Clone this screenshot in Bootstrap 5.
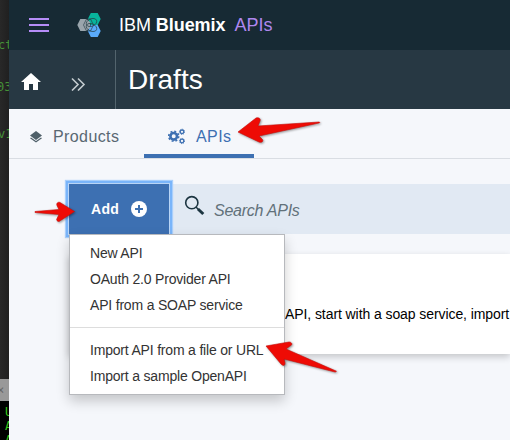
<!DOCTYPE html>
<html lang="en">
<head>
<meta charset="utf-8">
<title>Drafts - IBM Bluemix APIs</title>
<link rel="stylesheet" href="https://cdn.jsdelivr.net/npm/bootstrap@5.3.0/dist/css/bootstrap.min.css">
<style>
body{width:510px;height:440px;background:#f5f7fb;font-family:"Liberation Sans",Arial,sans-serif;color:#000}
svg{display:block;flex:none}
.terminal{width:9px;font:12px/16px "DejaVu Sans Mono",monospace;color:#459237;background:linear-gradient(90deg,#282828,#202020)}
.terminal div{flex:none;overflow:hidden;white-space:pre}
.terminal .t1{height:53px;padding-top:37px;text-indent:-2px}
.terminal .t2{height:42px;padding-top:26px;text-indent:-3px}
.terminal .t3{height:284px;padding-top:31px;text-indent:-2px}
.terminal .tab-x{height:22px;background:#999;color:#666;line-height:22px;text-indent:-3px}
.terminal .shell{height:61px;background:#000;color:#35c91b;line-height:14px;padding:4px 0 0 5px}
.topbar{height:50px;background:#172a34;padding-left:20px;font-size:18px;color:#fff}
.brand-name{margin-left:14px;letter-spacing:-.05px}
.violet{color:#af87ee;margin-left:9px}
.titlebar{height:59px;background:#273843}
.homebox{width:107px;border-right:1px solid #53646d;padding:23px 0 0 12px}
.titlebar h1{font-size:28px;line-height:60px;margin:0 0 0 12px;font-weight:400;color:#fff}
.tabs{height:50px;border-bottom:1px solid #d9dde3;font-size:16px;letter-spacing:.4px;color:#596872}
.tabs .nav-link{padding:0;height:49px;display:flex;align-items:center;color:#596872}
.tabs .prod{width:135px;padding:6px 0 0 21px}
.tabs .prod span{margin-left:11px}
.tabs .apis{width:110px;padding:10px 0 0 24px;color:#3d70b2;border-bottom:4px solid #3d70b2}
.tabs .apis span{margin-left:11px}
.workspace{padding:25px 0 0 60px}
.toolbar{height:50px;background:#e1e9f3}
.add{width:100px;height:50px;border-radius:0;background:#3d70b2;color:#fff;font-size:14px;font-weight:700;padding:0 0 0 22px;box-shadow:0 0 0 1px #b9d5f6,0 0 0 3px #7ab5fa,0 0 1px 4px #a9cffb;letter-spacing:.3px;z-index:2}
.add:hover{background:#3d70b2;color:#fff}
.add svg{margin-left:12px}
.search{font-size:16px;letter-spacing:-.25px;font-style:italic;color:#62717a;padding:4px 0 0 9px}
.notice{height:100px;margin-top:20px;background:#fff;box-shadow:0 3px 7px #0003;padding:50px 0 0 216px;font-size:14px;letter-spacing:-.08px;line-height:20px;white-space:nowrap}
.add-menu{display:block;top:50px;left:0;width:216px;height:161px;border:1px solid #b7b9bd;border-radius:0;padding:5px 0 0;box-shadow:0 6px 12px #0003;z-index:3;font-size:14px;background:#fff}
.add-menu .dropdown-item{padding:0 0 0 20px;height:26px;line-height:26px;color:#333;font-size:14px;letter-spacing:-.19px}
.add-menu .dropdown-divider{margin:9px 0 9px;border-color:#ddd;opacity:1}
.arrows{left:0;top:0;z-index:5;pointer-events:none;filter:drop-shadow(1px 1px 1px #0006)}
</style>
</head>
<body class="d-flex overflow-hidden position-relative">
<aside class="terminal d-flex flex-column overflow-hidden flex-shrink-0">
  <div class="t1">ct</div><div class="t2">03</div><div class="t3">v1</div><div class="tab-x">×</div>
  <div class="shell d-flex flex-column"><span>U</span><span>A</span><span>A</span></div>
</aside>
<main class="flex-grow-1 overflow-hidden">
  <header class="topbar d-flex align-items-center">
    <svg width="20" height="14" fill="#b68df7"><path d="M0 0h20v2H0zM0 6h20v2H0zM0 12h20v2H0z"/></svg>
    <svg class="ms-4" width="32" height="26" viewBox="73 12 32 26">
      <path fill="#08b49c" d="M90.800 13h6.900l3 6-3 6h-6.900l-3-6z"/>
      <path fill="#5aaafa" d="M90.800 25h6.900l3 6-3 6h-6.900l-3-6z"/>
      <path fill="#9aa5ac" d="M80.300 19h6.200l3.500 3v6l-3.500 3h-6.200l-3-6z"/>
      <g fill="none" stroke="#263f48" stroke-opacity=".85" stroke-width=".8"><path d="M86.500 19h4l3 6-3 6h-4l-3-6z"/><ellipse cx="91.500" cy="22.500" rx="5.500" ry="3.700" transform="rotate(-24 91.500 22.500)"/><ellipse cx="91.500" cy="27.500" rx="5.500" ry="3.700" transform="rotate(24 91.500 27.500)"/></g>
    </svg>
    <span class="brand-name text-nowrap">IBM <b>Bluemix</b></span><span class="violet">APIs</span>
  </header>
  <div class="titlebar d-flex">
    <div class="homebox d-flex align-items-start">
      <svg width="20" height="18"><path fill="#fff" d="M10 0l10 9h-3v8h-5v-6H8v6H3V9H0z"/></svg>
      <svg class="ms-4" width="24" height="18" fill="none" stroke="#c2cace" stroke-width="1.6"><path d="M7 5.500l6 6-6 6M13 5.500l6 6-6 6"/></svg>
    </div>
    <h1>Drafts</h1>
  </div>
  <nav class="tabs nav flex-nowrap">
    <a class="nav-link prod"><svg width="12" height="12" fill="#4f6069"><path d="M6 0l6 4.500L6 9 0 4.500z"/><path d="M0 7.200L6 11.600l6-4.400-1-.8-5 3.600-5-3.600z"/></svg><span>Products</span></a>
    <a class="nav-link apis">
      <svg width="17" height="17" viewBox="0 0 17 17" fill="none" stroke="#3d70b2"><circle cx="5.700" cy="8.300" r="3.300" stroke-width="2.600"/><circle cx="5.700" cy="8.300" r="5" stroke-width="1.600" stroke-dasharray="1.96 1.96"/><circle cx="14" cy="3.800" r="1.800" stroke-width="1.300"/><circle cx="14" cy="3.800" r="2.600" stroke-width="1" stroke-dasharray="1.02 1.02"/><circle cx="14" cy="13" r="1.800" stroke-width="1.300"/><circle cx="14" cy="13" r="2.600" stroke-width="1" stroke-dasharray="1.02 1.02"/></svg>
      <span>APIs</span></a>
  </nav>
  <section class="workspace">
    <div class="toolbar d-flex position-relative">
      <button class="btn add border-0 d-flex align-items-center flex-shrink-0 position-relative">Add<svg width="16" height="16"><circle cx="8" cy="8" r="8" fill="#fff"/><path d="M4 8h8M8 4v8" stroke="#3d70b2" stroke-width="2"/></svg></button>
      <div class="dropdown-menu add-menu">
        <a class="dropdown-item">New API</a><a class="dropdown-item">OAuth 2.0 Provider API</a><a class="dropdown-item">API from a SOAP service</a>
        <hr class="dropdown-divider">
        <a class="dropdown-item">Import API from a file or URL</a><a class="dropdown-item">Import a sample OpenAPI</a>
      </div>
      <svg width="36" height="50" viewBox="169 184 36 50" fill="none" stroke="#1c3541"><circle cx="191.800" cy="202.700" r="6.100" stroke-width="1.600"/><path d="M196 207l2.500 2.500" stroke-width="1.500"/><path d="M198 209l5.300 5" stroke-width="3"/></svg>
      <div class="search d-flex align-items-center">Search APIs</div>
    </div>
    <div class="notice">API, start with a soap service, import</div>
  </section>
</main>
<svg class="arrows position-absolute" width="510" height="440" fill="#ee0b05" stroke="#c70b08" stroke-width=".6" stroke-linejoin="round">
  <path d="M238 132l18-14c3-1 5 1 4 3l-2 5 61-4c1 0 1 1 0 1l-60 13 3 3c2 2 0 4-3 3z"/>
  <path d="M74.500 211.500l-15.500 10c-2 0-3-2-2-3l2-4-24-2v-1l24-2-2-4c-1-2 1-4 3-3z"/>
  <path d="M266 346l23-4c3 0 4 3 1 4l-4 3 50 22c1 0 0 1-1 1l-51-13 1 4c0 3-2 3-4 1z"/>
</svg>
<script src="https://cdn.jsdelivr.net/npm/bootstrap@5.3.0/dist/js/bootstrap.bundle.min.js"></script>
</body>
</html>
